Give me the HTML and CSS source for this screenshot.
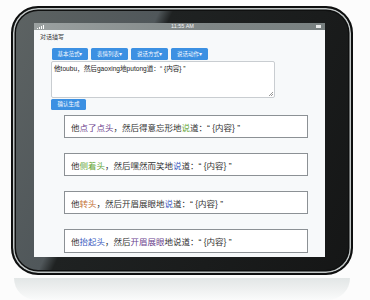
FILE: index.html
```html
<!DOCTYPE html>
<html lang="zh">
<head>
<meta charset="utf-8">
<link rel="stylesheet" href="styles.css">
</head>
<body>
<div class="device">
  <div class="screen">
    <div class="statusbar">
      <svg class="signal" width="8" height="4" viewBox="0 0 8 4"><rect x="0" y="3" width="1" height="1" fill="#fff"/><rect x="2" y="2" width="1" height="2" fill="#fff"/><rect x="4" y="1" width="1" height="3" fill="#fff"/><rect x="6" y="0" width="1" height="4" fill="#fff"/></svg>
      <span class="time">11:55 AM</span>
      <span class="battery"></span>
    </div>
    <div class="app">
      <div class="title">对话描写</div>
      <div class="panel">
        <div class="toolbar">
          <span class="btn w36">基本范式▾</span>
          <span class="btn">表情列表▾</span>
          <span class="btn">说话方式▾</span>
          <span class="btn">说话动作▾</span>
        </div>
        <div class="textarea">他toubu，然后gaoxing地putong道：“ {内容} ”<span class="grip"></span></div>
        <span class="confirm">确认生成</span>
      </div>
      <div class="results">
        <div class="box">他<span class="c-purple">点了点头</span>，然后得意忘形地<span class="c-green">说</span>道：“ {内容} ”</div>
        <div class="box">他<span class="c-green">侧着头</span>，然后嘿然而笑地<span class="c-blue">说</span>道：“ {内容} ”</div>
        <div class="box">他<span class="c-orange">转头</span>，然后开眉展眼地<span class="c-blue">说</span>道：“ {内容} ”</div>
        <div class="box tall">他<span class="c-blue">抬起头</span>，然后<span class="c-purple">开眉展眼</span>地说道：“ {内容} ”</div>
      </div>
    </div>
  </div>
</div>
<div class="reflection"></div>
</body>
</html>
```
FILE: styles.css
```css
html, body {
  margin: 0;
  padding: 0;
  background: #fcfcfc;
  width: 370px;
  height: 300px;
  overflow: hidden;
  font-family: "Liberation Sans", "Noto Sans CJK SC", sans-serif;
}

.device {
  box-sizing: border-box;
  width: 342px;
  height: 269px;
  margin: 6px 0 0 11px;
  padding: 15px 26px 16px 21px;
  border: 2px solid #0e0f0f;
  border-radius: 27px;
  background: linear-gradient(115deg, #5d6363 0%, #50575a 32%, #1f2222 35%, #151616 100%);
  box-shadow: inset 0 0 0 1.5px #c2c7c7, inset 0 0 0 3px #0f1010;
}

.screen {
  width: 291px;
  height: 234px;
  background: #f7f9fa;
  overflow: hidden;
  display: flex;
  flex-direction: column;
}

.statusbar {
  height: 7px;
  flex: none;
  background: linear-gradient(90deg, #9ba1a1, #7f8686 60%, #788080);
  display: flex;
  align-items: center;
  justify-content: space-between;
  padding: 0 4px 0 3px;
}

.time {
  color: #f2f4f4;
  font-size: 5.5px;
  line-height: 7px;
  margin-left: 4px;
}

.battery {
  width: 5px;
  height: 2.5px;
  background: #e8eaea;
}

.app {
  flex: 1;
  display: flex;
  flex-direction: column;
}

.title {
  height: 14px;
  line-height: 14px;
  padding-left: 6px;
  font-size: 6px;
  color: #3a3a3a;
}

.panel {
  margin: 4px 0 0 17px;
  display: flex;
  flex-direction: column;
  align-items: flex-start;
}

.toolbar {
  display: flex;
  gap: 3px;
  padding-left: 1px;
}

.btn {
  width: 37px;
  height: 12px;
  line-height: 12px;
  text-align: center;
  background: #3c90e2;
  color: #f3f8ff;
  font-size: 5.5px;
  border-radius: 1.5px;
}

.btn.w36 {
  width: 36px;
}

.textarea {
  position: relative;
  box-sizing: border-box;
  width: 224px;
  height: 37px;
  margin-top: 1px;
  padding: 2px 2px;
  background: #ffffff;
  border: 1px solid #c9cdd1;
  border-radius: 2px;
  font-size: 6.6px;
  line-height: 9px;
  color: #222;
}

.grip {
  position: absolute;
  right: 1px;
  bottom: 1px;
  width: 4px;
  height: 4px;
  background: linear-gradient(135deg, transparent 45%, #999 45%, #999 55%, transparent 55%, transparent 75%, #999 75%, #999 85%, transparent 85%);
}

.confirm {
  margin-top: 1px;
  width: 35px;
  height: 11px;
  line-height: 11px;
  text-align: center;
  background: #3c90e2;
  color: #f3f8ff;
  font-size: 5.5px;
  border-radius: 1.5px;
}

.results {
  margin: 5px 0 0 30px;
  display: flex;
  flex-direction: column;
  gap: 15px;
}

.box {
  box-sizing: border-box;
  width: 244px;
  height: 23px;
  padding-left: 6px;
  display: flex;
  align-items: center;
  background: #ffffff;
  border: 1px solid #8c9195;
  font-size: 8.5px;
  color: #333;
  white-space: pre;
}

.box.tall {
  height: 24px;
}

.c-purple { color: #6b3f8e; }
.c-green { color: #67a83a; }
.c-blue { color: #3c5cbf; }
.c-orange { color: #c47335; }

.reflection {
  width: 336px;
  height: 22px;
  margin: 3px 0 0 14px;
  border-radius: 0 0 30px 30px;
  background: linear-gradient(#e2e6e6, #eef0f0 50%, #fafbfb);
}
```
